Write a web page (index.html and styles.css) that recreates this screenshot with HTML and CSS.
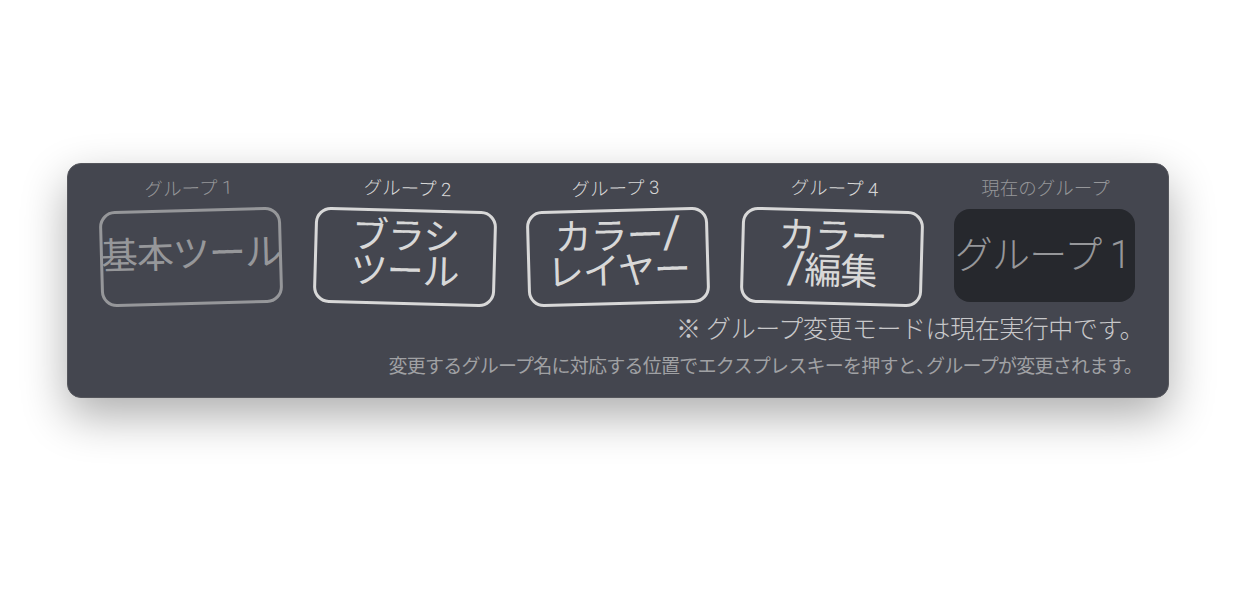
FILE: index.html
```html
<!DOCTYPE html>
<html lang="ja">

<head>
    <meta charset="UTF-8">
    <title>グループ変更</title>
    <link rel="stylesheet" href="styles.css">
</head>

<body>
    <div class="panel">
        <div class="groups">
            <div class="group dim">
                <div class="group-name name-left">グループ 1</div>
                <div class="tile tilt-a"><span class="tile-text one-line">基本ツール</span></div>
            </div>
            <div class="group">
                <div class="group-name name-right">グループ 2</div>
                <div class="tile tilt-b"><span class="tile-text">ブラシ<br>ツール</span></div>
            </div>
            <div class="group">
                <div class="group-name name-left">グループ 3</div>
                <div class="tile tilt-a"><span class="tile-text">カラー<span class="slash">/</span><br>レイヤー</span></div>
            </div>
            <div class="group">
                <div class="group-name name-right">グループ 4</div>
                <div class="tile tilt-b"><span class="tile-text">カラー<br><span class="slash">/</span>編集</span></div>
            </div>
            <div class="group current">
                <div class="group-name">現在のグループ</div>
                <div class="current-box">グループ 1</div>
            </div>
        </div>
        <p class="note">※ グループ変更モードは現在実行中です。</p>
        <p class="hint">変更するグループ名に対応する位置でエクスプレスキーを押すと<span class="comma">、</span>グループが変更されます。</p>
    </div>
</body>

</html>
```

FILE: styles.css
```css
* {
    box-sizing: border-box;
    padding: 0;
    margin: 0;
}

html,
body {
    height: 100%;
}

body {
    background: #fff;
    font-family: Roboto, "Noto Sans CJK JP", "Noto Sans", sans-serif;
    font-weight: 300;
    padding: 163px 67px 0;
}

.panel {
    width: 1102px;
    height: 235px;
    padding: 15px 33px 0 32px;
    background: #44464f;
    border-radius: 14px;
    border: 1px solid #55565c;
    box-shadow: 0 18px 46px rgba(0, 0, 0, 0.32);
}

.groups {
    display: grid;
    grid-template-columns: repeat(5, 183px);
    column-gap: 30.5px;
}

.group {
    color: #d8d8d8;
}

.dim,
.current {
    color: #96979a;
}

.group-name {
    height: 20px;
    line-height: 20px;
    margin-bottom: 10px;
    font-size: 18.5px;
    text-align: center;
}

.name-left {
    transform: translateX(-3px) rotate(-1.6deg);
}

.name-right {
    transform: translateX(2px) rotate(1.6deg);
}

.tile {
    width: 182px;
    height: 96px;
    border: 3px solid currentColor;
    border-radius: 16px;
    display: flex;
    align-items: center;
    justify-content: center;
}

.tilt-a {
    transform: rotate(-1.6deg);
}

.tilt-b {
    transform: rotate(1.6deg);
}

.tile-text {
    font-size: 37px;
    font-weight: 400;
    line-height: 35px;
    text-align: center;
    white-space: nowrap;
    letter-spacing: -1px;
    margin-top: -6px;
}

.slash {
    font-size: 45px;
    line-height: 0;
}

.current-box {
    width: 181px;
    height: 93px;
    margin-top: 2px;
    background: #26282d;
    border-radius: 16px;
    display: flex;
    align-items: center;
    justify-content: center;
    font-size: 38px;
    white-space: nowrap;
    letter-spacing: -0.8px;
    padding: 0 4px 8px 0;
}

.note,
.hint {
    text-align: right;
    white-space: nowrap;
}

.note {
    margin: 9px -9px 0 0;
    font-size: 25px;
    line-height: 32px;
    color: #c8c8ca;
    letter-spacing: -0.45px;
}

.hint {
    margin: 7px -7px 0 0;
    font-size: 19px;
    font-weight: 400;
    line-height: 28px;
    color: #a0a1a4;
    letter-spacing: -0.75px;
}

.comma {
    letter-spacing: -9px;
}
```
